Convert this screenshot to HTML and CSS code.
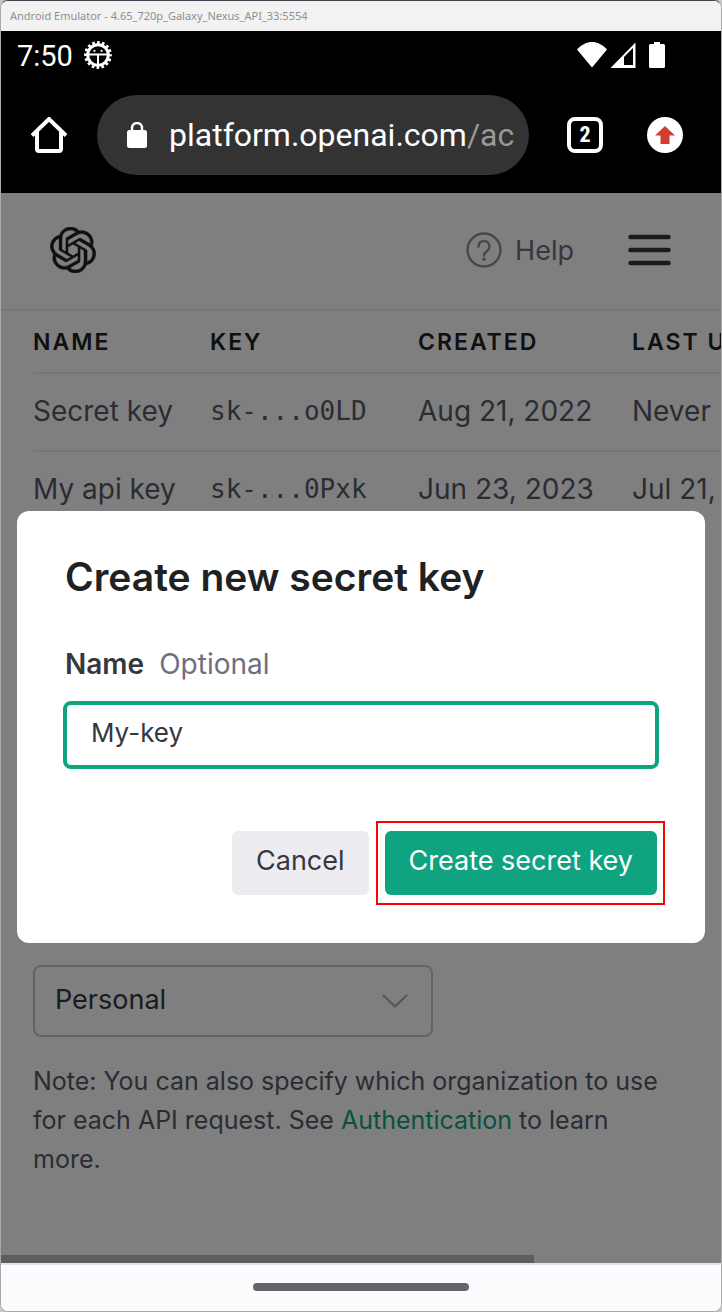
FILE: index.html
```html
<!DOCTYPE html>
<html lang="en">
<head>
<meta charset="utf-8">
<meta name="viewport" content="width=device-width, initial-scale=1">
<title>Android Emulator</title>
<link rel="stylesheet" href="styles.css">
</head>
<body>
<div class="window">
  <div class="titlebar">Android Emulator - 4.65_720p_Galaxy_Nexus_API_33:5554</div>

  <div class="chrome">
    <div class="status">
      <span class="clock">7:50</span>
      <svg class="debug" viewBox="0 0 28 28" width="28" height="28" aria-hidden="true">
        <circle cx="14" cy="14" r="10.3" fill="none" stroke="#fff" stroke-width="3"/>
        <circle cx="14" cy="14" r="12.4" fill="none" stroke="#fff" stroke-width="3" stroke-dasharray="2.6 2.27" stroke-dashoffset="1.3"/>
        <path d="M4 13.6h20M14 14v10" stroke="#fff" stroke-width="2"/>
        <circle cx="10.4" cy="9.8" r="1.1" fill="#fff"/>
        <circle cx="17.6" cy="9.8" r="1.1" fill="#fff"/>
      </svg>
      <div class="signals">
        <svg viewBox="0 0 30 26" width="30" height="26" aria-hidden="true"><path d="M0 7.5C9-2.500 21-2.500 30 7.500L15 25.500z" fill="#fff"/></svg>
        <svg viewBox="0 0 26 26" width="26" height="26" aria-hidden="true"><path d="M25.500 .5V26H.5z" fill="#fff"/><path d="M14 15l9-9v17h-9z" fill="#000"/></svg>
        <svg class="battery" viewBox="0 0 16 26" width="16" height="26" aria-hidden="true"><path d="M5 0h6v2h3.500Q16 2 16 3.500v21q0 1.500-1.500 1.500h-13Q0 26 0 24.500v-21Q0 2 1.500 2H5z" fill="#fff"/></svg>
      </div>
    </div>
    <div class="toolbar">
      <button class="icon-btn" type="button" aria-label="Home">
        <svg viewBox="0 0 36 36" width="36" height="36"><path d="M1 18.500L18 2l17 16.500M6 15v17q0 2 2 2h20q2 0 2-2V15" fill="none" stroke="#fff" stroke-width="4"/></svg>
      </button>
      <div class="address">
        <svg viewBox="0 0 20 26" width="20" height="26" aria-hidden="true"><path d="M5 10V6a5 5 0 0 1 10 0v4" fill="none" stroke="#fff" stroke-width="2.400"/><rect y="8" width="20" height="18" rx="2.500" fill="#fff"/></svg>
        <span class="url">platform.openai.com<span class="path">/ac</span></span>
      </div>
      <button class="tabs" type="button">2</button>
      <button class="update" type="button" aria-label="Update available">
        <svg viewBox="0 0 20 18" width="20" height="18"><path d="M10 0l10 9.500h-5.500V18h-9V9.500H0z" fill="#d43d2d"/></svg>
      </button>
    </div>
  </div>

  <main class="viewport">
    <div class="page">
      <header class="site-header">
        <svg class="logo" viewBox="0 0 24 24" width="46" height="46" aria-label="OpenAI"><path fill="#202123" stroke="#202123" stroke-width=".25" d="M22.2819 9.8211a5.9847 5.9847 0 0 0-.5157-4.9108 6.0462 6.0462 0 0 0-6.5098-2.9A6.0651 6.0651 0 0 0 4.9807 4.1818a5.9847 5.9847 0 0 0-3.9977 2.9 6.0462 6.0462 0 0 0 .7427 7.0966 5.98 5.98 0 0 0 .511 4.9107 6.051 6.051 0 0 0 6.5146 2.9001A5.9847 5.9847 0 0 0 13.2599 24a6.0557 6.0557 0 0 0 5.7718-4.2058 5.9894 5.9894 0 0 0 3.9977-2.9001 6.0557 6.0557 0 0 0-.7475-7.0729zm-9.022 12.6081a4.4755 4.4755 0 0 1-2.8764-1.0408l.1419-.0804 4.7783-2.7582a.7948.7948 0 0 0 .3927-.6813v-6.7369l2.02 1.1686a.071.071 0 0 1 .038.052v5.5826a4.504 4.504 0 0 1-4.4945 4.4944zm-9.6607-4.1254a4.4708 4.4708 0 0 1-.5346-3.0137l.142.0852 4.783 2.7582a.7712.7712 0 0 0 .7806 0l5.8428-3.3685v2.3324a.0804.0804 0 0 1-.0332.0615L9.74 19.9502a4.4992 4.4992 0 0 1-6.1408-1.6464zM2.3408 7.8956a4.485 4.485 0 0 1 2.3655-1.9728V11.6a.7664.7664 0 0 0 .3879.6765l5.8144 3.3543-2.0201 1.1685a.0757.0757 0 0 1-.071 0l-4.8303-2.7865A4.504 4.504 0 0 1 2.3408 7.872zm16.5963 3.8558L13.1038 8.364 15.1192 7.2a.0757.0757 0 0 1 .071 0l4.8303 2.7913a4.4944 4.4944 0 0 1-.6765 8.1042v-5.6772a.79.79 0 0 0-.407-.667zm2.0107-3.0231l-.142-.0852-4.7735-2.7818a.7759.7759 0 0 0-.7854 0L9.409 9.2297V6.8974a.0662.0662 0 0 1 .0284-.0615l4.8303-2.7866a4.4992 4.4992 0 0 1 6.6802 4.66zM8.3065 12.863l-2.02-1.1638a.0804.0804 0 0 1-.038-.0567V6.0742a4.4992 4.4992 0 0 1 7.3757-3.4537l-.142.0805L8.704 5.459a.7948.7948 0 0 0-.3927.6813zm1.0976-2.3654l2.602-1.4998 2.6069 1.4998v2.9994l-2.5974 1.4997-2.6067-1.4997Z"/></svg>
        <a class="help" href="#help">
          <svg viewBox="0 0 36 36" width="36" height="36" aria-hidden="true"><circle cx="18" cy="18" r="16.500" fill="none" stroke="#8e8ea0" stroke-width="2.400"/><path d="M12.500 14.500a5.500 5.500 0 1 1 9 4.200c-2 1.700-3.500 2.300-3.500 4.800" fill="none" stroke="#8e8ea0" stroke-width="2.400" stroke-linecap="round"/><circle cx="18" cy="27.200" r="1.700" fill="#8e8ea0"/></svg>
          Help
        </a>
        <button class="menu" type="button" aria-label="Menu">
          <svg viewBox="0 0 43 32" width="43" height="32"><path d="M2.500 3h38M2.500 16h38M2.500 29h38" stroke="#353740" stroke-width="4.500" stroke-linecap="round"/></svg>
        </button>
      </header>

      <div class="table-wrap">
        <table class="keys">
          <colgroup><col class="c-name"><col class="c-key"><col class="c-created"><col class="c-used"></colgroup>
          <thead>
            <tr><th scope="col">NAME</th><th scope="col">KEY</th><th scope="col">CREATED</th><th scope="col">LAST USED</th></tr>
          </thead>
          <tbody>
            <tr><td>Secret key</td><td class="mono">sk-...o0LD</td><td>Aug 21, 2022</td><td>Never</td></tr>
            <tr><td>My api key</td><td class="mono">sk-...0Pxk</td><td>Jun 23, 2023</td><td>Jul 21,</td></tr>
          </tbody>
        </table>
      </div>

      <section class="organization">
        <div class="select-box">
          <select class="select" aria-label="Default organization"><option>Personal</option></select>
          <svg class="chevron" viewBox="0 0 26 14" width="26" height="14" aria-hidden="true"><path d="M1.500 1.500L13 12.500 24.500 1.500" fill="none" stroke="#acacbe" stroke-width="2.400" stroke-linecap="round" stroke-linejoin="round"/></svg>
        </div>
        <p class="note">Note: You can also specify which organization to use for each API request. See <a href="#authentication">Authentication</a> to learn more.</p>
      </section>
      <div class="scroll-thumb"></div>
    </div>

    <div class="overlay">
      <form class="dialog" role="dialog" aria-labelledby="dialog-title">
        <h1 class="dialog-title" id="dialog-title">Create new secret key</h1>
        <label class="field-label" for="key-name">Name <span class="optional">Optional</span></label>
        <input class="field" id="key-name" type="text" value="My-key">
        <div class="actions">
          <button class="btn" type="button">Cancel</button>
          <button class="btn primary" type="button">Create secret key</button>
        </div>
      </form>
    </div>
  </main>

  <div class="navbar"><div class="handle"></div></div>
</div>
</body>
</html>
```
FILE: styles.css
```css
* { box-sizing: border-box; }
body { margin: 0; background: #c8c8c8; font-family: Inter, "Liberation Sans", sans-serif; color: #565869; }
button, input, select { font: inherit; color: inherit; }
button { border: 0; padding: 0; background: none; }
svg { display: block; flex: none; }

.window { display: flex; flex-direction: column; min-height: 100vh; border: 1px solid #a9a9a9; border-top-color: #45424f; border-radius: 8px; overflow: hidden; background: #fdfbfe; }
.titlebar { height: 30px; padding: 0 9px; background: #f3f2f3; color: #8f8f8f; font: 11px/30px "Noto Sans", sans-serif; white-space: nowrap; }

.chrome { background: #000; color: #fff; font-family: Roboto, sans-serif; padding-bottom: 18px; }
.status { display: flex; align-items: center; height: 48px; margin-bottom: 16px; padding: 0 56px 0 16px; font-size: 29px; }
.clock { padding-top: 2px; }
.debug { margin-left: 11px; }
.signals { display: flex; margin-left: auto; gap: 3px; }
.battery { margin-left: 10px; }
.toolbar { display: flex; align-items: center; height: 80px; padding: 0 38px 0 30px; }
.icon-btn { width: 36px; height: 36px; }
.address { display: flex; align-items: center; flex: 1; min-width: 0; height: 80px; margin: 0 38px 0 30px; padding: 0 12px 0 30px; gap: 22px; border-radius: 40px; background: #333; font-size: 32px; }
.url { overflow: hidden; white-space: nowrap; }
.path { color: #999; }
.tabs { width: 36px; height: 36px; margin-right: 44px; border: 4px solid #fff; border-radius: 8px; color: #fff; font: 700 22px/28px "Roboto Condensed", Roboto, sans-serif; text-align: center; }
.update { display: grid; place-items: center; width: 36px; height: 36px; border-radius: 50%; background: #fff; }

.viewport { position: relative; display: flex; flex-direction: column; flex: 1; }
.page { display: flex; flex-direction: column; flex: 1; background: #fff; }
.site-header { display: flex; align-items: center; height: 118px; padding: 0 50px 2px 49px; border-bottom: 2px solid #ececf1; }
.help { display: flex; align-items: center; gap: 13px; margin-left: auto; margin-right: 54px; color: #6e6e80; font-size: 27px; text-decoration: none; }
.table-wrap { padding-left: 32px; overflow: hidden; }
.keys { width: 900px; table-layout: fixed; border-collapse: collapse; text-align: left; font-size: 28px; white-space: nowrap; }
.c-name { width: 177px; }
.c-key { width: 208px; }
.c-created { width: 214px; }
.keys th { height: 62px; padding: 0; border-bottom: 2px solid #ececf1; color: #202123; font-size: 23px; font-weight: 600; letter-spacing: 2px; }
.keys td { height: 78px; padding: 0 0 3px; border-bottom: 2px solid #ececf1; }
.keys tr:last-child td { border-bottom: 0; }
.keys .mono { font-family: "DejaVu Sans Mono", monospace; font-size: 26px; }

.organization { margin-top: auto; padding: 0 48px 76px 32px; }
.select-box { position: relative; width: 400px; max-width: 100%; }
.select { display: block; width: 100%; height: 72px; padding: 0 60px 4px 20px; border: 2px solid #c5c5d2; border-radius: 8px; background: #fff; color: #353740; font-size: 27px; appearance: none; }
.chevron { position: absolute; right: 25px; top: 29px; pointer-events: none; }
.note { margin: 25px 0 0; font-size: 25px; line-height: 39px; }
.note a { color: #10a37f; text-decoration: none; }
.scroll-thumb { width: 74%; height: 8px; background: #bdbdbd; }

.overlay { position: absolute; inset: 0; display: flex; align-items: center; padding: 0 16px 2px; background: rgba(0, 0, 0, .5); }
.dialog { display: flex; flex-direction: column; width: 100%; padding: 42px 46px 48px; border-radius: 12px; background: #fff; }
.dialog-title { margin: 0 2px 42px; color: #202123; font-size: 39px; line-height: 48px; font-weight: 600; }
.field-label { margin: 0 2px 16px; color: #353740; font-size: 28px; line-height: 42px; font-weight: 600; }
.optional { margin-left: 8px; color: #6e6e80; font-weight: 400; }
.field { width: 100%; height: 68px; padding: 0 24px 6px; border: 4px solid #10a37f; border-radius: 8px; outline: 0; background: #fff; color: #353740; font-size: 26px; }
.actions { display: flex; justify-content: flex-end; gap: 16px; margin-top: 62px; padding-right: 2px; }
.btn { position: relative; height: 64px; padding: 0 24px 6px; border-radius: 6px; background: #ececf1; color: #353740; font-size: 27px; white-space: nowrap; }
.primary { background: #10a37f; color: #fff; }
.primary::after { content: ""; position: absolute; inset: -10px -8px -10px -9px; border: 2px solid #f00; }

.navbar { display: grid; place-items: center; height: 48px; padding-bottom: 2px; border-top: 2px solid #e6e1ee; background: #fdfbfe; }
.handle { width: 30%; height: 8px; border-radius: 4px; background: #68656a; }
```
